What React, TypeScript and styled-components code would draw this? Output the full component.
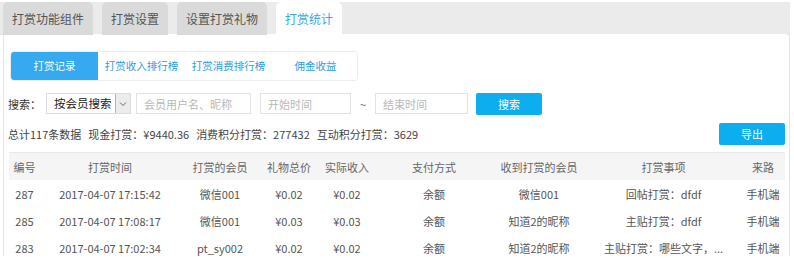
import React from "react";
import styled, { createGlobalStyle } from "styled-components";

const GlobalStyle = createGlobalStyle`
  html, body {
    margin: 0;
    padding: 0;
    background: #fff;
  }
  body {
    font-family: "Microsoft YaHei", "Noto Sans CJK SC", "Noto Sans", sans-serif;
    font-size: 11px;
    color: #555;
  }
  * { box-sizing: border-box; }
`;

const Page = styled.div`
  width: 790px;
  padding-top: 2px;
`;

const TabBar = styled.div`
  display: flex;
  height: 33px;
  padding-left: 3px;
  background: #ebebeb;
  border-bottom: 1px solid #e2e2e2;
`;

const Tab = styled.div<{ active?: boolean }>`
  display: flex;
  align-items: center;
  height: 33px;
  padding: 0 9px;
  margin-right: 9px;
  border-radius: 5px 5px 0 0;
  font-size: 12px;
  line-height: 1;
  background: ${(p) => (p.active ? "#fff" : "#dadada")};
  color: ${(p) => (p.active ? "#3aa6e2" : "#555")};
`;

const Panel = styled.div`
  margin-left: 3px;
  margin-top: -1px;
  padding: 17px 4px 0 5px;
  height: 222px;
  background: #fff;
  border-left: 1px solid #e6e6e6;
  border-right: 1px solid #e2e2e2;
  border-top-right-radius: 4px;
  overflow: hidden;
`;

const SubTabs = styled.div`
  display: flex;
  width: 348px;
  height: 30px;
  margin-left: 1px;
  border: 1px solid #ececec;
  border-radius: 4px;
  overflow: hidden;
`;

const SubTab = styled.div<{ active?: boolean }>`
  flex: 0 0 87px;
  display: flex;
  align-items: center;
  justify-content: center;
  font-size: 10.5px;
  line-height: 1;
  background: ${(p) => (p.active ? "#36aaf0" : "#fff")};
  color: ${(p) => (p.active ? "#fff" : "#2a9de0")};
`;

const SearchRow = styled.div`
  display: flex;
  align-items: center;
  height: 21px;
  margin-top: 12px;
`;

const Label = styled.span`
  width: 38px;
  margin-left: -1px;
  color: #333;
`;

const Select = styled.div`
  display: flex;
  align-items: center;
  justify-content: space-between;
  width: 85px;
  height: 21px;
  padding-left: 7px;
  border: 1px solid #dcdcdc;
  font-size: 11.5px;
  line-height: 1;
  white-space: nowrap;
  color: #222;
`;

const Arrow = styled.span`
  display: flex;
  align-items: center;
  justify-content: center;
  flex: 0 0 15px;
  height: 19px;
  border-left: 1px solid #b5b5b5;
  background: #ececec;
`;

const Input = styled.div<{ w: number; ml: number }>`
  display: flex;
  align-items: center;
  width: ${(p) => p.w}px;
  height: 21px;
  margin-left: ${(p) => p.ml}px;
  padding-left: 7px;
  border: 1px solid #e2e2e2;
  color: #b8b8b8;
`;

const Tilde = styled.span`
  width: 24px;
  text-align: center;
  color: #666;
`;

const BlueButton = styled.div<{ ml?: number }>`
  display: flex;
  align-items: center;
  justify-content: center;
  width: 66px;
  height: 22px;
  margin-left: ${(p) => p.ml || 0}px;
  border-radius: 2px;
  background: #0caef0;
  color: #fff;
`;

const StatsRow = styled.div`
  display: flex;
  align-items: center;
  justify-content: space-between;
  height: 22px;
  margin-top: 9px;
  color: #444;
`;

const Stats = styled.div`
  display: flex;
  gap: 7px;
  margin-left: -1px;
`;

const Table = styled.div`
  margin-top: 7px;
  border-top: 1px solid #e8e8e8;
`;

const cols = "31px 140px 80px 58px 58px 116px 94px 155px 44px";

const Row = styled.div<{ head?: boolean }>`
  display: grid;
  grid-template-columns: ${cols};
  height: 27px;
  align-items: center;
  background: ${(p) => (p.head ? "#f5f5f5" : "#fff")};
  color: ${(p) => (p.head ? "#666" : "#555")};
`;

const Cell = styled.div`
  text-align: center;
  white-space: nowrap;
`;

const headers = ["编号", "打赏时间", "打赏的会员", "礼物总价", "实际收入", "支付方式", "收到打赏的会员", "打赏事项", "来路"];

const rows = [
  ["287", "2017-04-07 17:15:42", "微信001", "¥0.02", "¥0.02", "余额", "微信001", "回帖打赏：dfdf", "手机端"],
  ["285", "2017-04-07 17:08:17", "微信001", "¥0.03", "¥0.03", "余额", "知道2的昵称", "主贴打赏：dfdf", "手机端"],
  ["283", "2017-04-07 17:02:34", "pt_sy002", "¥0.02", "¥0.02", "余额", "知道2的昵称", "主贴打赏：哪些文字，...", "手机端"],
];

const App: React.FC = () => {
  return (
    <Page>
      <GlobalStyle />
      <TabBar>
        <Tab>打赏功能组件</Tab>
        <Tab>打赏设置</Tab>
        <Tab>设置打赏礼物</Tab>
        <Tab active>打赏统计</Tab>
      </TabBar>
      <Panel>
        <SubTabs>
          <SubTab active>打赏记录</SubTab>
          <SubTab>打赏收入排行榜</SubTab>
          <SubTab>打赏消费排行榜</SubTab>
          <SubTab>佣金收益</SubTab>
        </SubTabs>
        <SearchRow>
          <Label>搜索：</Label>
          <Select>
            按会员搜索
            <Arrow>
              <svg width="8" height="6" viewBox="0 0 8 6">
                <polyline points="1,1.5 4,4.5 7,1.5" fill="none" stroke="#666" strokeWidth="1" />
              </svg>
            </Arrow>
          </Select>
          <Input w={115} ml={5}>会员用户名、昵称</Input>
          <Input w={91} ml={9}>开始时间</Input>
          <Tilde>~</Tilde>
          <Input w={93} ml={0}>结束时间</Input>
          <BlueButton ml={8}>搜索</BlueButton>
        </SearchRow>
        <StatsRow>
          <Stats>
            <span>总计117条数据</span>
            <span>现金打赏：¥9440.36</span>
            <span>消费积分打赏：277432</span>
            <span>互动积分打赏：3629</span>
          </Stats>
          <BlueButton>导出</BlueButton>
        </StatsRow>
        <Table>
          <Row head>
            {headers.map((h) => (
              <Cell key={h}>{h}</Cell>
            ))}
          </Row>
          {rows.map((r) => (
            <Row key={r[0]}>
              {r.map((c, i) => (
                <Cell key={i}>{c}</Cell>
              ))}
            </Row>
          ))}
        </Table>
      </Panel>
    </Page>
  );
};

export default App;
